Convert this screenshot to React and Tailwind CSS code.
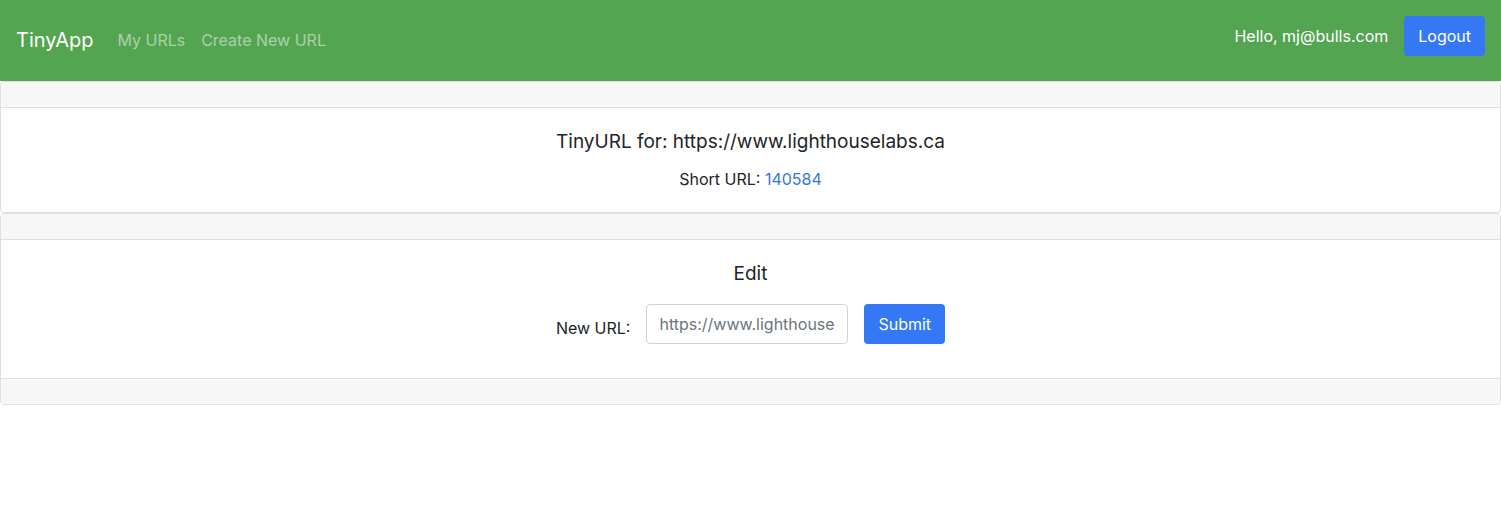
const button =
  "h-10 rounded bg-[#3478f6] px-[14px] text-[16px] leading-6 text-white hover:bg-blue-600";

function Navbar() {
  return (
    <nav className="flex items-start justify-between bg-[#54a552] px-4 pt-4 pb-[17px]">
      <div className="flex h-12 items-center">
        <a href="#" className="mr-6 text-[20px] text-white">TinyApp</a>
        <a href="#urls" className="mr-4 text-[16px] text-white/50">My URLs</a>
        <a href="#new" className="text-[16px] text-white/50">Create New URL</a>
      </div>
      <form className="flex items-center gap-4" onSubmit={(e) => e.preventDefault()}>
        <span className="text-[16px] text-white">Hello, mj@bulls.com</span>
        <button type="submit" className={button}>Logout</button>
      </form>
    </nav>
  );
}

function Bar({ className }) {
  return <div className={`h-[26px] border-[#dfdfdf] bg-[#f7f7f7] ${className}`} />;
}

export default function App() {
  return (
    <div className="min-h-screen bg-white font-[Inter,sans-serif] text-[#212529]">
      <Navbar />
      <main>
        <section className="overflow-hidden rounded border border-[#dfdfdf] text-center">
          <Bar className="border-b" />
          <div className="px-5 pt-5 pb-[21px]">
            <h1 className="text-[19px] leading-7">TinyURL for: https://www.lighthouselabs.ca</h1>
            <p className="mt-[11px] text-[16px] leading-6">
              Short URL: <a href="#140584" className="text-[#3876dc]">140584</a>
            </p>
          </div>
        </section>
        <section className="overflow-hidden rounded border border-[#dfdfdf] text-center">
          <Bar className="border-b" />
          <div className="px-5 pt-5 pb-[34px]">
            <h2 className="text-[19px] leading-7">Edit</h2>
            <form className="mt-4 flex items-center justify-center gap-4" onSubmit={(e) => e.preventDefault()}>
              <label htmlFor="new-url" className="pt-2 text-[16px]">New URL:</label>
              <input
                id="new-url"
                type="text"
                placeholder="https://www.lighthouselabs.ca"
                className="h-10 w-[202px] rounded border border-[#ced4da] px-3 text-[16px] placeholder:text-[#6c757d]"
              />
              <button type="submit" className={button}>Submit</button>
            </form>
          </div>
          <Bar className="border-t" />
        </section>
      </main>
    </div>
  );
}
